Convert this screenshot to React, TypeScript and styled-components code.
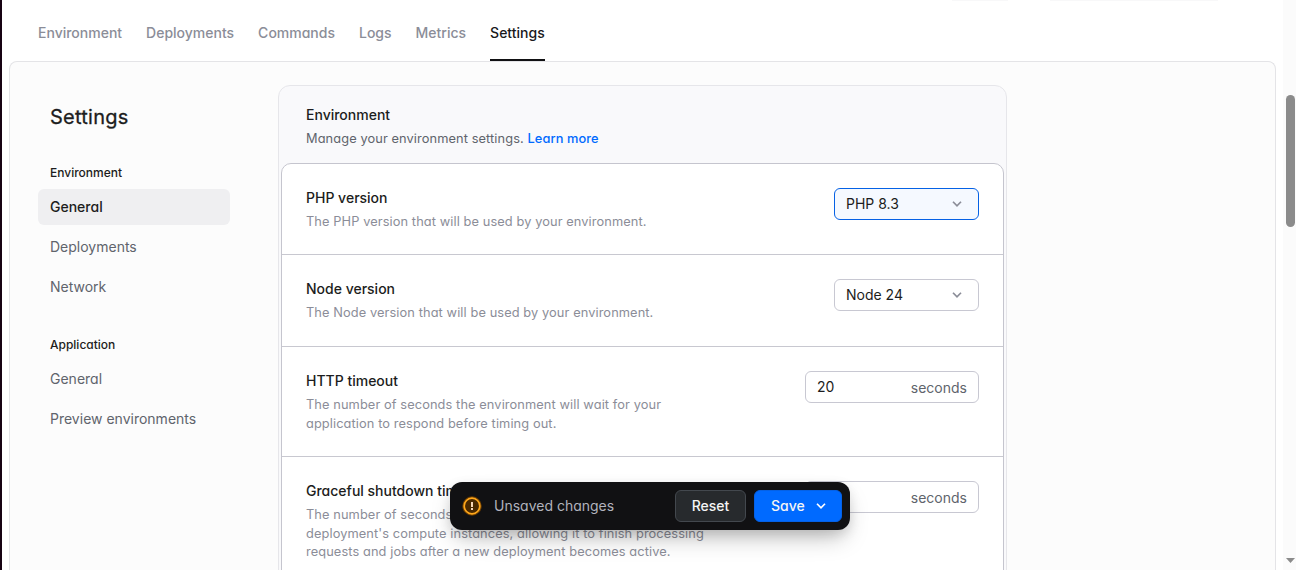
import React from "react";
import styled, { createGlobalStyle } from "styled-components";

const GlobalStyle = createGlobalStyle`
  * { box-sizing: border-box; }
  html, body { margin: 0; height: 570px; overflow: hidden; }
  body {
    background: #fff;
    color: #1c1d20;
    font-family: Inter, "Liberation Sans", sans-serif;
    font-feature-settings: "cv11";
    font-size: 14px;
    line-height: 20px;
  }
`;

const Screen = styled.div`
  position: relative;
  display: flex;
  width: 1296px;
  height: 570px;
  overflow: hidden;
  border-left: 2px solid #170313;
`;

const Main = styled.main`
  flex: 1;
  min-width: 0;
  display: flex;
  flex-direction: column;
  padding: 0 7px;
`;

const TopEdge = styled.div`
  display: flex;
  height: 1px;
  padding-left: 943px;
  gap: 42px;
`;

const EdgeShade = styled.span<{ $w: number }>`
  width: ${(p) => p.$w}px;
  background: #f8f8f9;
`;

const Tabs = styled.nav`
  display: flex;
  gap: 24px;
  height: 60px;
  padding-left: 29px;
`;

const Tab = styled.a<{ $active?: boolean }>`
  height: 60px;
  padding-top: 22px;
  font-weight: 500;
  color: ${(p) => (p.$active ? "#18191b" : "#8b8d98")};
  border-bottom: 2px solid ${(p) => (p.$active ? "#111113" : "transparent")};
`;

const Panel = styled.section`
  flex: 1;
  min-height: 0;
  display: flex;
  align-items: flex-start;
  padding: 23px 28px 0;
  border: 1px solid #e4e4e7;
  border-bottom: 0;
  border-radius: 8px 8px 0 0;
  background: #fcfcfc;
  overflow: hidden;
`;

const Sidebar = styled.aside`
  width: 192px;
  margin-right: 48px;
  padding-top: 18px;
`;

const PageTitle = styled.h1`
  margin: 0 0 32px 12px;
  font-size: 20px;
  line-height: 28px;
  font-weight: 400;
  letter-spacing: 0.25px;
  -webkit-text-stroke: 0.3px currentColor;
`;

const NavGroup = styled.div`
  display: flex;
  flex-direction: column;
  gap: 4px;
  margin-bottom: 30px;
`;

const NavHeading = styled.h2`
  margin: 0 0 2px;
  padding: 0 12px;
  font-size: 12px;
  line-height: 20px;
  font-weight: 500;
`;

const NavItem = styled.a<{ $active?: boolean }>`
  height: 36px;
  padding: 8px 12px;
  border-radius: 6px;
  font-weight: ${(p) => (p.$active ? 500 : 400)};
  color: ${(p) => (p.$active ? "#1c1d20" : "#60646c")};
  background: ${(p) => (p.$active ? "#efeff1" : "transparent")};
`;

const Card = styled.div`
  width: 729px;
  padding: 0 2px;
  border: 1px solid #e6e6ea;
  border-radius: 12px 12px 0 0;
  background: #f9f9fb;
`;

const CardHeader = styled.header`
  height: 76.8px;
  padding: 19px 25px 0;
`;

const Title = styled.h3`
  margin: 0 0 5.08px;
  font-size: 14px;
  line-height: 20px;
  font-weight: 500;
`;

const Description = styled.p<{ $dark?: boolean }>`
  margin: 0 0 -1.08px;
  font-size: 12.8px;
  line-height: 18.57px;
  letter-spacing: 0.1px;
  color: ${(p) => (p.$dark ? "#60646c" : "#8b8d98")};
`;

const Link = styled.a`
  font-weight: 500;
  color: #006aff;
`;

const Rows = styled.div`
  border: 1px solid #c5c5ce;
  border-radius: 10px 10px 0 0;
  background: #fff;
`;

const Row = styled.div`
  display: flex;
  justify-content: space-between;
  align-items: flex-start;
  padding: 24px;
  & + & { border-top: 1px solid #c8c8d0; }
`;

const RowText = styled.div`
  width: 420px;
`;

const Field = styled.div<{ $focused?: boolean; $w: number }>`
  display: flex;
  align-items: center;
  justify-content: space-between;
  width: ${(p) => p.$w}px;
  height: 32px;
  padding: 0 11px;
  border: 1px solid ${(p) => (p.$focused ? "#0561e5" : "#c8c8d2")};
  border-radius: 6px;
  background: ${(p) => (p.$focused ? "#f5f9ff" : "#fff")};
`;

const Suffix = styled.span`
  margin-left: auto;
  padding-top: 2px;
  color: #60646c;
`;

const Chevron = styled.svg`
  width: 10px;
  height: 6px;
  margin-right: 5px;
  fill: none;
  stroke: #8b8d98;
  stroke-width: 1.7;
`;

const Scrollbar = styled.div`
  display: flex;
  flex-direction: column;
  justify-content: space-between;
  align-items: center;
  width: 13px;
  padding: 95px 0 7px 2px;
  background: #fbfbfb;
`;

const Thumb = styled.div`
  width: 9px;
  height: 132px;
  border-radius: 5px;
  background: #8b8b8b;
`;

const Arrow = styled.svg`
  width: 9px;
  height: 5px;
  fill: #8b8b8b;
`;

const Toast = styled.div`
  position: absolute;
  left: 448px;
  top: 482px;
  display: flex;
  align-items: center;
  width: 400px;
  height: 48px;
  padding: 0 8px 0 12px;
  border-radius: 12px;
  background: #111113;
  box-shadow: 0 12px 24px -6px rgba(0, 0, 0, 0.28), 0 4px 12px rgba(0, 0, 0, 0.1);
`;

const ToastText = styled.span`
  margin-left: 12px;
  color: #b2b3bd;
`;

const Button = styled.button<{ $primary?: boolean }>`
  display: flex;
  align-items: center;
  height: 32px;
  padding: 0 16px;
  border: 1px solid ${(p) => (p.$primary ? "#0561e5" : "#43484e")};
  border-radius: 6px;
  background: ${(p) => (p.$primary ? "#006aff" : "#272a2d")};
  color: #f5f5f5;
  font: 500 14px/20px Inter, "Liberation Sans", sans-serif;
  font-feature-settings: "cv11";
`;

const ResetButton = styled(Button)`
  width: 71px;
  justify-content: center;
  margin-left: auto;
`;

const SaveButton = styled(Button)`
  width: 88px;
  justify-content: space-between;
  margin-left: 8px;
`;

const SaveChevron = styled(Chevron)`
  margin-right: -1px;
  stroke: #fff;
`;

const WarningIcon = () => (
  <svg width="20" height="20" viewBox="0 0 20 20">
    <circle cx="10" cy="10" r="8.6" fill="#4d2c00" stroke="#6b3d00" strokeWidth="2.2" />
    <circle cx="10" cy="10" r="7.8" fill="#4a2900" stroke="#ffa81c" strokeWidth="1.7" />
    <path d="M10 6v5" stroke="#ffe0c2" strokeWidth="1.9" />
    <path d="M10 12v2" stroke="#ffe0c2" strokeWidth="1.9" />
  </svg>
);

const TABS = ["Environment", "Deployments", "Commands", "Logs", "Metrics", "Settings"];

const NAV = [
  { heading: "Environment", items: ["General", "Deployments", "Network"] },
  { heading: "Application", items: ["General", "Preview environments"] },
];

const SelectField = ({ value, focused }: { value: string; focused?: boolean }) => (
  <Field $w={145} $focused={focused}>
    {value}
    <Chevron viewBox="0 0 10 6"><path d="M1 .75L5 4.75L9 .75" /></Chevron>
  </Field>
);

const SecondsField = ({ value }: { value?: string }) => (
  <Field $w={174}>
    {value}
    <Suffix>seconds</Suffix>
  </Field>
);

const SettingRow = ({ title, text, children }: { title: string; text: React.ReactNode; children: React.ReactNode }) => (
  <Row>
    <RowText>
      <Title>{title}</Title>
      <Description>{text}</Description>
    </RowText>
    {children}
  </Row>
);

export default function App() {
  return (
    <>
      <GlobalStyle />
      <Screen>
        <Main>
          <TopEdge>
            <EdgeShade $w={56} />
            <EdgeShade $w={168} />
          </TopEdge>
          <Tabs>
            {TABS.map((t) => <Tab key={t} $active={t === "Settings"}>{t}</Tab>)}
          </Tabs>
          <Panel>
            <Sidebar>
              <PageTitle>Settings</PageTitle>
              {NAV.map((group, g) => (
                <NavGroup key={group.heading}>
                  <NavHeading>{group.heading}</NavHeading>
                  {group.items.map((item, i) => (
                    <NavItem key={item} $active={g === 0 && i === 0}>{item}</NavItem>
                  ))}
                </NavGroup>
              ))}
            </Sidebar>
            <Card>
              <CardHeader>
                <Title>Environment</Title>
                <Description $dark>Manage your environment settings. <Link>Learn more</Link></Description>
              </CardHeader>
              <Rows>
                <SettingRow title="PHP version" text="The PHP version that will be used by your environment.">
                  <SelectField value="PHP 8.3" focused />
                </SettingRow>
                <SettingRow title="Node version" text="The Node version that will be used by your environment.">
                  <SelectField value="Node 24" />
                </SettingRow>
                <SettingRow title="HTTP timeout" text={<>The number of seconds the environment will wait for your<br />application to respond before timing out.</>}>
                  <SecondsField value="20" />
                </SettingRow>
                <SettingRow title="Graceful shutdown timeout" text={<>The number of seconds to wait before terminating a<br />deployment's compute instances, allowing it to finish processing<br />requests and jobs after a new deployment becomes active.</>}>
                  <SecondsField />
                </SettingRow>
              </Rows>
            </Card>
          </Panel>
        </Main>
        <Scrollbar>
          <Thumb />
          <Arrow viewBox="0 0 9 5"><path d="M0 0h9L4.5 5z" /></Arrow>
        </Scrollbar>
        <Toast>
          <WarningIcon />
          <ToastText>Unsaved changes</ToastText>
          <ResetButton>Reset</ResetButton>
          <SaveButton $primary>
            Save
            <SaveChevron viewBox="0 0 10 6"><path d="M1 .75L5 4.75L9 .75" /></SaveChevron>
          </SaveButton>
        </Toast>
      </Screen>
    </>
  );
}
